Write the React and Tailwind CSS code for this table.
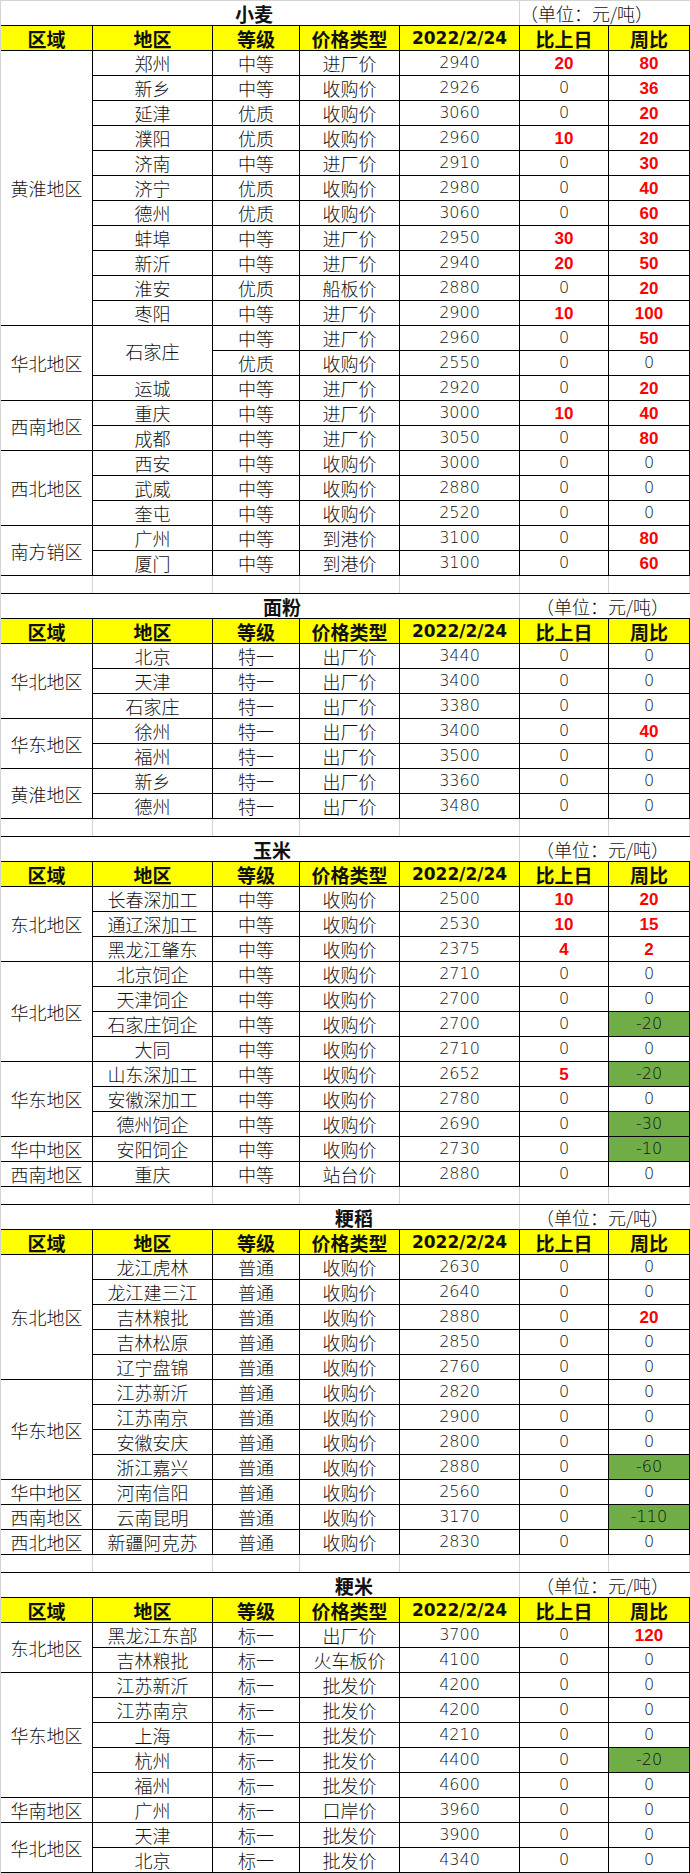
import React from "react";

const SPAN = {
  1: "row-span-1",
  2: "row-span-2",
  3: "row-span-3",
  4: "row-span-4",
  5: "row-span-5",
  11: "row-span-11",
};

const GRID = "grid grid-cols-[92px_120px_87px_100px_120px_89px_81px]";
const CELL =
  "flex items-center justify-center border-r border-b border-black overflow-hidden whitespace-nowrap leading-none text-[#111]";
const CN = "font-['Noto_Sans_CJK_SC',sans-serif] font-light text-[18px]";
const NUM = "font-['DejaVu_Sans',sans-serif] font-extralight text-[16px]";

const r = (grade, type, price, d, w) => ({ grade, type, price, d, w });

const sections = [
  {
    title: "小麦",
    titlePad: "pl-[234px]",
    unitPad: "pl-0",
    groups: [
      {
        region: "黄淮地区",
        items: [
          { name: "郑州", rows: [r("中等", "进厂价", 2940, 20, 80)] },
          { name: "新乡", rows: [r("中等", "收购价", 2926, 0, 36)] },
          { name: "延津", rows: [r("优质", "收购价", 3060, 0, 20)] },
          { name: "濮阳", rows: [r("优质", "收购价", 2960, 10, 20)] },
          { name: "济南", rows: [r("中等", "进厂价", 2910, 0, 30)] },
          { name: "济宁", rows: [r("优质", "收购价", 2980, 0, 40)] },
          { name: "德州", rows: [r("优质", "收购价", 3060, 0, 60)] },
          { name: "蚌埠", rows: [r("中等", "进厂价", 2950, 30, 30)] },
          { name: "新沂", rows: [r("中等", "进厂价", 2940, 20, 50)] },
          { name: "淮安", rows: [r("优质", "船板价", 2880, 0, 20)] },
          { name: "枣阳", rows: [r("中等", "进厂价", 2900, 10, 100)] },
        ],
      },
      {
        region: "华北地区",
        items: [
          {
            name: "石家庄",
            rows: [r("中等", "进厂价", 2960, 0, 50), r("优质", "收购价", 2550, 0, 0)],
          },
          { name: "运城", rows: [r("中等", "进厂价", 2920, 0, 20)] },
        ],
      },
      {
        region: "西南地区",
        items: [
          { name: "重庆", rows: [r("中等", "进厂价", 3000, 10, 40)] },
          { name: "成都", rows: [r("中等", "进厂价", 3050, 0, 80)] },
        ],
      },
      {
        region: "西北地区",
        items: [
          { name: "西安", rows: [r("中等", "收购价", 3000, 0, 0)] },
          { name: "武威", rows: [r("中等", "收购价", 2880, 0, 0)] },
          { name: "奎屯", rows: [r("中等", "收购价", 2520, 0, 0)] },
        ],
      },
      {
        region: "南方销区",
        items: [
          { name: "广州", rows: [r("中等", "到港价", 3100, 0, 80)] },
          { name: "厦门", rows: [r("中等", "到港价", 3100, 0, 60)] },
        ],
      },
    ],
  },
  {
    title: "面粉",
    titlePad: "pl-[262px]",
    unitPad: "pl-[16px]",
    groups: [
      {
        region: "华北地区",
        items: [
          { name: "北京", rows: [r("特一", "出厂价", 3440, 0, 0)] },
          { name: "天津", rows: [r("特一", "出厂价", 3400, 0, 0)] },
          { name: "石家庄", rows: [r("特一", "出厂价", 3380, 0, 0)] },
        ],
      },
      {
        region: "华东地区",
        items: [
          { name: "徐州", rows: [r("特一", "出厂价", 3400, 0, 40)] },
          { name: "福州", rows: [r("特一", "出厂价", 3500, 0, 0)] },
        ],
      },
      {
        region: "黄淮地区",
        items: [
          { name: "新乡", rows: [r("特一", "出厂价", 3360, 0, 0)] },
          { name: "德州", rows: [r("特一", "出厂价", 3480, 0, 0)] },
        ],
      },
    ],
  },
  {
    title: "玉米",
    titlePad: "pl-[252px]",
    unitPad: "pl-[16px]",
    groups: [
      {
        region: "东北地区",
        items: [
          { name: "长春深加工", rows: [r("中等", "收购价", 2500, 10, 20)] },
          { name: "通辽深加工", rows: [r("中等", "收购价", 2530, 10, 15)] },
          { name: "黑龙江肇东", rows: [r("中等", "收购价", 2375, 4, 2)] },
        ],
      },
      {
        region: "华北地区",
        items: [
          { name: "北京饲企", rows: [r("中等", "收购价", 2710, 0, 0)] },
          { name: "天津饲企", rows: [r("中等", "收购价", 2700, 0, 0)] },
          { name: "石家庄饲企", rows: [r("中等", "收购价", 2700, 0, -20)] },
          { name: "大同", rows: [r("中等", "收购价", 2710, 0, 0)] },
        ],
      },
      {
        region: "华东地区",
        items: [
          { name: "山东深加工", rows: [r("中等", "收购价", 2652, 5, -20)] },
          { name: "安徽深加工", rows: [r("中等", "收购价", 2780, 0, 0)] },
          { name: "德州饲企", rows: [r("中等", "收购价", 2690, 0, -30)] },
        ],
      },
      {
        region: "华中地区",
        items: [{ name: "安阳饲企", rows: [r("中等", "收购价", 2730, 0, -10)] }],
      },
      {
        region: "西南地区",
        items: [{ name: "重庆", rows: [r("中等", "站台价", 2880, 0, 0)] }],
      },
    ],
  },
  {
    title: "粳稻",
    titlePad: "pl-[334px]",
    unitPad: "pl-[16px]",
    groups: [
      {
        region: "东北地区",
        items: [
          { name: "龙江虎林", rows: [r("普通", "收购价", 2630, 0, 0)] },
          { name: "龙江建三江", rows: [r("普通", "收购价", 2640, 0, 0)] },
          { name: "吉林粮批", rows: [r("普通", "收购价", 2880, 0, 20)] },
          { name: "吉林松原", rows: [r("普通", "收购价", 2850, 0, 0)] },
          { name: "辽宁盘锦", rows: [r("普通", "收购价", 2760, 0, 0)] },
        ],
      },
      {
        region: "华东地区",
        items: [
          { name: "江苏新沂", rows: [r("普通", "收购价", 2820, 0, 0)] },
          { name: "江苏南京", rows: [r("普通", "收购价", 2900, 0, 0)] },
          { name: "安徽安庆", rows: [r("普通", "收购价", 2800, 0, 0)] },
          { name: "浙江嘉兴", rows: [r("普通", "收购价", 2880, 0, -60)] },
        ],
      },
      {
        region: "华中地区",
        items: [{ name: "河南信阳", rows: [r("普通", "收购价", 2560, 0, 0)] }],
      },
      {
        region: "西南地区",
        items: [{ name: "云南昆明", rows: [r("普通", "收购价", 3170, 0, -110)] }],
      },
      {
        region: "西北地区",
        items: [{ name: "新疆阿克苏", rows: [r("普通", "收购价", 2830, 0, 0)] }],
      },
    ],
  },
  {
    title: "粳米",
    titlePad: "pl-[334px]",
    unitPad: "pl-[16px]",
    groups: [
      {
        region: "东北地区",
        items: [
          { name: "黑龙江东部", rows: [r("标一", "出厂价", 3700, 0, 120)] },
          { name: "吉林粮批", rows: [r("标一", "火车板价", 4100, 0, 0)] },
        ],
      },
      {
        region: "华东地区",
        items: [
          { name: "江苏新沂", rows: [r("标一", "批发价", 4200, 0, 0)] },
          { name: "江苏南京", rows: [r("标一", "批发价", 4200, 0, 0)] },
          { name: "上海", rows: [r("标一", "批发价", 4210, 0, 0)] },
          { name: "杭州", rows: [r("标一", "批发价", 4400, 0, -20)] },
          { name: "福州", rows: [r("标一", "批发价", 4600, 0, 0)] },
        ],
      },
      {
        region: "华南地区",
        items: [{ name: "广州", rows: [r("标一", "口岸价", 3960, 0, 0)] }],
      },
      {
        region: "华北地区",
        items: [
          { name: "天津", rows: [r("标一", "批发价", 3900, 0, 0)] },
          { name: "北京", rows: [r("标一", "批发价", 4340, 0, 0)] },
        ],
      },
    ],
  },
];

function Val({ v }) {
  if (v > 0)
    return (
      <div
        className={`${CELL} font-['Liberation_Sans',sans-serif] text-[17px] font-bold !text-[#ff0000]`}
      >
        {v}
      </div>
    );
  if (v < 0)
    return <div className={`${CELL} ${NUM} bg-[#70ad47]`}>{v}</div>;
  return <div className={`${CELL} ${NUM}`}>{v}</div>;
}

function TitleRow({ s, first }) {
  return (
    <div
      className={`flex border-b border-black ${
        first ? "h-[26px] border-t border-t-[#d4d4d4]" : "h-[25px]"
      }`}
    >
      <div
        className={`flex w-[519px] items-center border-r border-[#d4d4d4] leading-none ${s.titlePad} font-['Noto_Sans_CJK_SC',sans-serif] text-[19px] font-bold text-[#111]`}
      >
        {s.title}
      </div>
      <div
        className={`flex flex-1 items-center leading-none ${s.unitPad} font-['Noto_Sans_CJK_SC',sans-serif] text-[18px] font-light text-[#111]`}
      >
        （单位：元/吨）
      </div>
    </div>
  );
}

function HeaderRow() {
  const h = `${CELL} font-['Noto_Sans_CJK_SC',sans-serif] text-[19px] font-bold`;
  return (
    <div className={`${GRID} h-[25px] bg-[#ffff00]`}>
      <div className={h}>区域</div>
      <div className={h}>地区</div>
      <div className={h}>等级</div>
      <div className={h}>价格类型</div>
      <div className={`${CELL} font-['DejaVu_Sans',sans-serif] text-[17px] font-bold`}>
        2022/2/24
      </div>
      <div className={h}>比上日</div>
      <div className={h}>周比</div>
    </div>
  );
}

function BlankRow() {
  const c = "border-r border-[#d4d4d4]";
  return (
    <div className={`${GRID} h-[18px] border-b border-black`}>
      <div className={c} />
      <div className={c} />
      <div className={c} />
      <div className={c} />
      <div className={c} />
      <div className={c} />
      <div className={c} />
    </div>
  );
}

function Body({ groups }) {
  const cells = [];
  groups.forEach((g, gi) => {
    const total = g.items.reduce((a, it) => a + it.rows.length, 0);
    cells.push(
      <div key={`g${gi}`} className={`${CELL} ${CN} ${SPAN[total]}`}>
        {g.region}
      </div>
    );
    g.items.forEach((it, ii) => {
      it.rows.forEach((row, ri) => {
        const k = `${gi}-${ii}-${ri}`;
        if (ri === 0)
          cells.push(
            <div key={`n${k}`} className={`${CELL} ${CN} ${SPAN[it.rows.length]}`}>
              {it.name}
            </div>
          );
        cells.push(
          <div key={`a${k}`} className={`${CELL} ${CN}`}>
            {row.grade}
          </div>,
          <div key={`b${k}`} className={`${CELL} ${CN}`}>
            {row.type}
          </div>,
          <div key={`c${k}`} className={`${CELL} ${NUM}`}>
            {row.price}
          </div>,
          <Val key={`d${k}`} v={row.d} />,
          <Val key={`e${k}`} v={row.w} />
        );
      });
    });
  });
  return <div className={`${GRID} auto-rows-[25px]`}>{cells}</div>;
}

export default function App() {
  return (
    <div className="w-[690px] bg-white">
      <div className="flex flex-col border-l border-[#d4d4d4]">
        {sections.map((s, i) => (
          <React.Fragment key={s.title}>
            {i > 0 && <BlankRow />}
            <TitleRow s={s} first={i === 0} />
            <HeaderRow />
            <Body groups={s.groups} />
          </React.Fragment>
        ))}
      </div>
    </div>
  );
}
